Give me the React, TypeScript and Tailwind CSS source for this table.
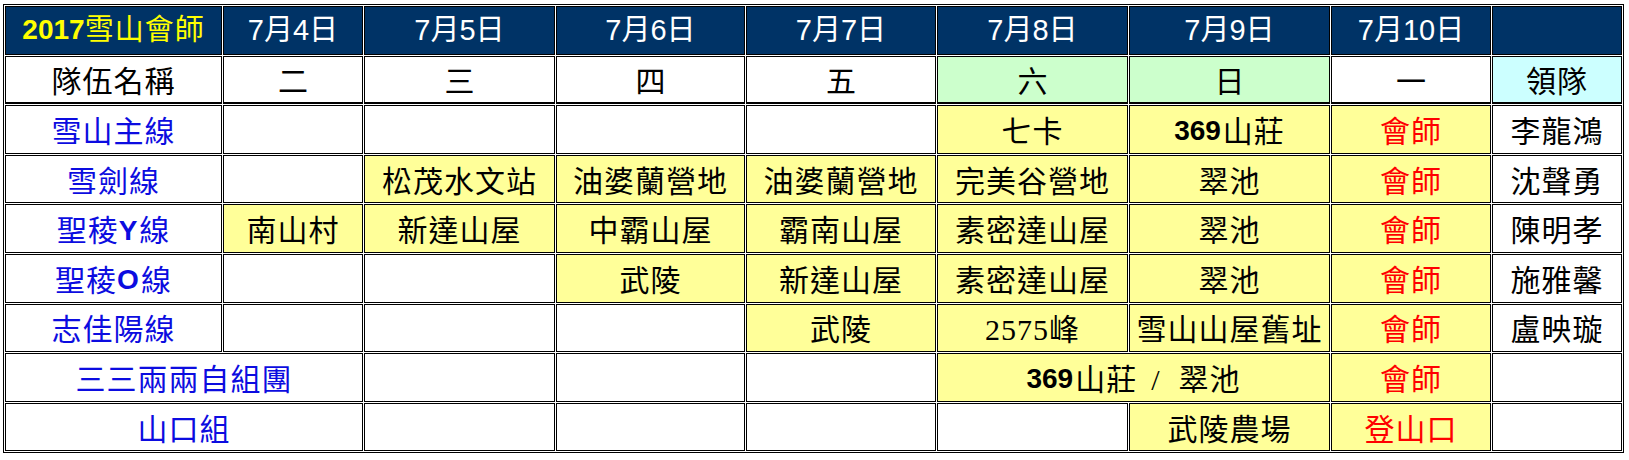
import React from "react";

const NAVY = "bg-[#003366]";
const YEL = "bg-[#ffff99]";
const GRN = "bg-[#ccffcc]";
const CYN = "bg-[#ccffff]";
const WHT = "bg-white";

const BODY_FONT = "font-['Liberation_Serif','Noto_Sans_CJK_TC',serif]";
const SANS_FONT = "font-['Liberation_Sans','Noto_Sans_CJK_TC',sans-serif]";

type CellProps = {
  bg?: string;
  span?: string;
  className?: string;
  children?: React.ReactNode;
};

const Cell = ({ bg = WHT, span = "", className = "", children }: CellProps) => (
  <div
    className={`flex items-center justify-center border border-black whitespace-nowrap pt-[4px] ${bg} ${span} ${className}`}
  >
    {children}
  </div>
);

// latin part that excel shows in bold arial
const B = ({ children }: { children: React.ReactNode }) => (
  <span className="font-['Liberation_Sans'] text-[28px] font-bold tracking-normal mr-[2px]">
    {children}
  </span>
);

const Team = ({ children, span }: { children: React.ReactNode; span?: string }) => (
  <Cell span={span} className="text-[#0c0ce0] tracking-[1px]">
    {children}
  </Cell>
);

const Red = ({ children }: { children: React.ReactNode }) => (
  <Cell bg={YEL} className="text-[#ff0000] tracking-[1px]">
    {children}
  </Cell>
);

const Y = ({ children, span }: { children: React.ReactNode; span?: string }) => (
  <Cell bg={YEL} span={span} className="tracking-[1px]">
    {children}
  </Cell>
);

const DATES = ["7月4日", "7月5日", "7月6日", "7月7日", "7月8日", "7月9日", "7月10日"];

export default function App() {
  return (
    <div className="w-[1629px] h-[460px] bg-white pt-[4px] pl-[3px]">
      <div
        className={`grid grid-cols-[217px_140px_191px_189px_190px_191px_201px_160px_130px] grid-rows-[repeat(9,48.6px)] gap-px w-fit border border-black p-px text-[30px] text-black ${BODY_FONT}`}
      >
        {/* header row */}
        <Cell bg={NAVY} className={`${SANS_FONT} !pt-0 text-[28px] font-bold text-[#ffff00]`}>
          2017<span className="font-normal text-[29px] tracking-[1px]">雪山會師</span>
        </Cell>
        {DATES.map((d) => (
          <Cell key={d} bg={NAVY} className={`${SANS_FONT} !pt-0 text-[29px] text-white`}>
            {d}
          </Cell>
        ))}
        <Cell bg={NAVY} />

        {/* weekdays */}
        <Cell className="tracking-[1px] border-b-2">隊伍名稱</Cell>
        <Cell className="border-b-2">二</Cell>
        <Cell className="border-b-2">三</Cell>
        <Cell className="border-b-2">四</Cell>
        <Cell className="border-b-2">五</Cell>
        <Cell bg={GRN} className="border-b-2">六</Cell>
        <Cell bg={GRN} className="border-b-2">日</Cell>
        <Cell className="border-b-2">一</Cell>
        <Cell bg={CYN} className="tracking-[1px] border-b-2">領隊</Cell>

        {/* 雪山主線 */}
        <Team>雪山主線</Team>
        <Cell />
        <Cell />
        <Cell />
        <Cell />
        <Y>七卡</Y>
        <Y>
          <B>369</B>山莊
        </Y>
        <Red>會師</Red>
        <Cell className="tracking-[1px]">李龍鴻</Cell>

        {/* 雪劍線 */}
        <Team>雪劍線</Team>
        <Cell />
        <Y>松茂水文站</Y>
        <Y>油婆蘭營地</Y>
        <Y>油婆蘭營地</Y>
        <Y>完美谷營地</Y>
        <Y>翠池</Y>
        <Red>會師</Red>
        <Cell className="tracking-[1px]">沈聲勇</Cell>

        {/* 聖稜Y線 */}
        <Team>
          聖稜<B>Y</B>線
        </Team>
        <Y>南山村</Y>
        <Y>新達山屋</Y>
        <Y>中霸山屋</Y>
        <Y>霸南山屋</Y>
        <Y>素密達山屋</Y>
        <Y>翠池</Y>
        <Red>會師</Red>
        <Cell className="tracking-[1px]">陳明孝</Cell>

        {/* 聖稜O線 */}
        <Team>
          聖稜<B>O</B>線
        </Team>
        <Cell />
        <Cell />
        <Y>武陵</Y>
        <Y>新達山屋</Y>
        <Y>素密達山屋</Y>
        <Y>翠池</Y>
        <Red>會師</Red>
        <Cell className="tracking-[1px]">施雅馨</Cell>

        {/* 志佳陽線 */}
        <Team>志佳陽線</Team>
        <Cell />
        <Cell />
        <Cell />
        <Y>武陵</Y>
        <Y>2575峰</Y>
        <Y>雪山山屋舊址</Y>
        <Red>會師</Red>
        <Cell className="tracking-[1px]">盧映璇</Cell>

        {/* 三三兩兩自組團 */}
        <Team span="col-span-2">三三兩兩自組團</Team>
        <Cell />
        <Cell />
        <Cell />
        <Y span="col-span-2">
          <B>369</B>山莊<span className="ml-[14px] mr-[18px]">/</span>翠池
        </Y>
        <Red>會師</Red>
        <Cell />

        {/* 山口組 */}
        <Team span="col-span-2">山口組</Team>
        <Cell />
        <Cell />
        <Cell />
        <Cell />
        <Y>武陵農場</Y>
        <Red>登山口</Red>
        <Cell />
      </div>
    </div>
  );
}
